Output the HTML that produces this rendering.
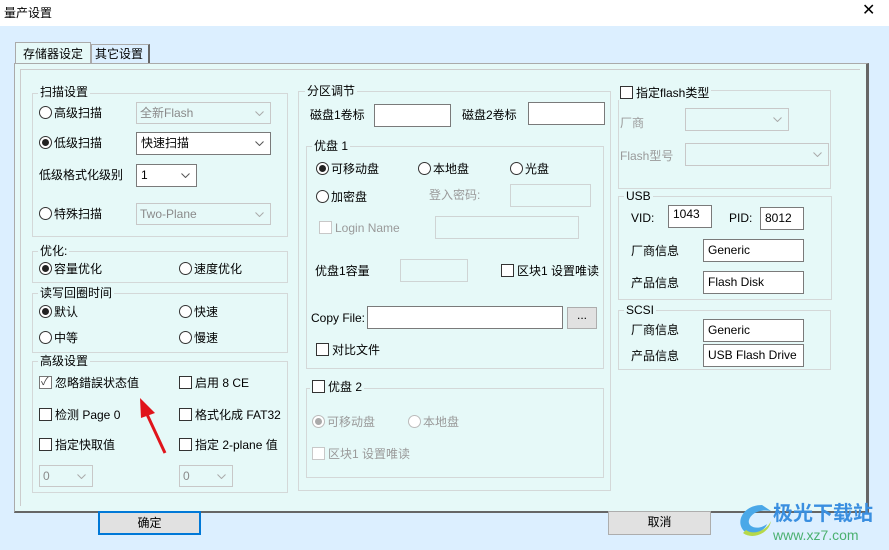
<!DOCTYPE html><html><head><meta charset="utf-8"><style>
*{box-sizing:border-box;margin:0;padding:0}
body{width:889px;height:550px;overflow:hidden;background:#dcefff;font:12px "Liberation Sans","Noto Sans CJK SC",sans-serif;color:#000;position:relative}
.a{position:absolute;white-space:nowrap;line-height:16px}
.g{position:absolute;border:1px solid #d4d8d8}
.gl{position:absolute;background:#e6f9f8;padding:0 2px;line-height:14px}
.in{position:absolute;background:#fff;border:1px solid #7a7a7a}
.dis{position:absolute;border:1px solid #cfd4d4;background:#e6f9f8}
.cb{position:absolute;background:#fff;border:1px solid #7a7a7a;font-size:12px;padding:2px 4px;line-height:16px}
.cbd{position:absolute;border:1px solid #c8c8c8;background:#e6f9f8;color:#8a8a8a;padding:2px 3px;line-height:16px}
.arr{position:absolute;right:6px;top:8px;width:9px;height:5px}
.r{display:inline-block;width:13px;height:13px;border:1px solid #333;border-radius:50%;background:#fff;vertical-align:-2px;margin-right:2px;position:relative}
.r.on::after{content:"";position:absolute;left:2px;top:2px;width:7px;height:7px;border-radius:50%;background:#222}
.c{display:inline-block;width:13px;height:13px;border:1px solid #333;background:#fff;vertical-align:-2px;margin-right:3px;position:relative}
.c.d{border-color:#c8c8c8}
.gray{color:#9a9a9a}
.btn{position:absolute;background:#e1e1e1;border:1px solid #adadad;text-align:center;line-height:20px}
</style></head><body>
<svg width="0" height="0" style="position:absolute"><defs><symbol id="ch" viewBox="0 0 9 5"><path d="M0.5 0.5 L4.5 4.5 L8.5 0.5" fill="none" stroke="#555" stroke-width="1"/></symbol><symbol id="chg" viewBox="0 0 9 5"><path d="M0.5 0.5 L4.5 4.5 L8.5 0.5" fill="none" stroke="#aaa" stroke-width="1"/></symbol></defs></svg>
<div style="position:absolute;left:0;top:0;width:889px;height:26px;background:#fff"></div>
<div class="a" style="left:4px;top:5px">量产设置</div>
<div class="a" style="left:862px;top:3px;font-size:16px">✕</div>
<div style="position:absolute;left:15px;top:42px;width:76px;height:22px;background:#e6f9f8;border:1px solid #aaa;border-bottom:none"></div>
<div class="a" style="left:23px;top:46px">存储器设定</div>
<div style="position:absolute;left:91px;top:44px;width:59px;height:19px;border:1px solid #aaa;border-right:2px solid #666;border-bottom:none"></div>
<div class="a" style="left:95px;top:46px">其它设置</div>
<div style="position:absolute;left:14px;top:63px;width:855px;height:450px;background:#e6f9f8;border:1px solid #aaa;border-right:3px solid #666;border-bottom:2px solid #666"></div>
<div style="position:absolute;left:20px;top:69px;width:840px;height:437px;border-left:1px solid #ccc;border-top:1px solid #ccc"></div>

<div class="g" style="left:32px;top:93px;width:256px;height:144px"></div>
<div class="gl" style="left:38px;top:85px">扫描设置</div>
<div class="a" style="left:39px;top:105px"><span class="r"></span>高级扫描</div>
<div class="cbd" style="left:136px;top:102px;width:135px;height:22px">全新Flash<svg class="arr"><use href="#chg"/></svg></div>
<div class="a" style="left:39px;top:135px"><span class="r on"></span>低级扫描</div>
<div class="cb" style="left:136px;top:132px;width:135px;height:23px">快速扫描<svg class="arr"><use href="#ch"/></svg></div>
<div class="a" style="left:39px;top:167px">低级格式化级别</div>
<div class="cb" style="left:136px;top:164px;width:61px;height:23px">1<svg class="arr"><use href="#ch"/></svg></div>
<div class="a" style="left:39px;top:206px"><span class="r"></span>特殊扫描</div>
<div class="cbd" style="left:136px;top:203px;width:135px;height:22px">Two-Plane<svg class="arr"><use href="#chg"/></svg></div>

<div class="g" style="left:32px;top:251px;width:256px;height:32px"></div>
<div class="gl" style="left:38px;top:244px">优化:</div>
<div class="a" style="left:39px;top:261px"><span class="r on"></span>容量优化</div>
<div class="a" style="left:179px;top:261px"><span class="r"></span>速度优化</div>

<div class="g" style="left:32px;top:293px;width:256px;height:60px"></div>
<div class="gl" style="left:38px;top:286px">读写回圈时间</div>
<div class="a" style="left:39px;top:304px"><span class="r on"></span>默认</div>
<div class="a" style="left:179px;top:304px"><span class="r"></span>快速</div>
<div class="a" style="left:39px;top:330px"><span class="r"></span>中等</div>
<div class="a" style="left:179px;top:330px"><span class="r"></span>慢速</div>

<div class="g" style="left:32px;top:361px;width:256px;height:132px"></div>
<div class="gl" style="left:38px;top:354px">高级设置</div>
<div class="a" style="left:39px;top:375px"><span class="c" style="border-color:#777"><span style="position:absolute;left:1px;top:-3px;font-size:11px;color:#444">✓</span></span>忽略錯誤状态值</div>
<div class="a" style="left:179px;top:375px"><span class="c"></span>启用 8 CE</div>
<div class="a" style="left:39px;top:407px"><span class="c"></span>检测 Page 0</div>
<div class="a" style="left:179px;top:407px"><span class="c"></span>格式化成 FAT32</div>
<div class="a" style="left:39px;top:437px"><span class="c"></span>指定快取值</div>
<div class="a" style="left:179px;top:437px"><span class="c"></span>指定 2-plane 值</div>
<div class="cbd" style="left:39px;top:465px;width:54px;height:22px">0<svg class="arr"><use href="#chg"/></svg></div>
<div class="cbd" style="left:179px;top:465px;width:54px;height:22px">0<svg class="arr"><use href="#chg"/></svg></div>
<svg style="position:absolute;left:135px;top:398px" width="35" height="60"><line x1="30" y1="55" x2="10" y2="12" stroke="#e0141b" stroke-width="3"/><polygon points="5,0 20,15 6,20" fill="#e0141b"/></svg>

<div class="g" style="left:298px;top:91px;width:313px;height:400px"></div>
<div class="gl" style="left:305px;top:84px">分区调节</div>
<div class="a" style="left:310px;top:107px">磁盘1卷标</div>
<div class="in" style="left:374px;top:104px;width:77px;height:23px"></div>
<div class="a" style="left:462px;top:107px">磁盘2卷标</div>
<div class="in" style="left:528px;top:102px;width:77px;height:23px"></div>
<div class="g" style="left:306px;top:146px;width:298px;height:223px"></div>
<div class="gl" style="left:312px;top:139px">优盘 1</div>
<div class="a" style="left:316px;top:161px"><span class="r on"></span>可移动盘</div>
<div class="a" style="left:418px;top:161px"><span class="r"></span>本地盘</div>
<div class="a" style="left:510px;top:161px"><span class="r"></span>光盘</div>
<div class="a" style="left:316px;top:189px"><span class="r"></span>加密盘</div>
<div class="a gray" style="left:429px;top:187px">登入密码:</div>
<div class="dis" style="left:510px;top:184px;width:81px;height:23px"></div>
<div class="a gray" style="left:319px;top:220px"><span class="c d"></span>Login Name</div>
<div class="dis" style="left:435px;top:216px;width:144px;height:23px"></div>
<div class="a" style="left:315px;top:263px">优盘1容量</div>
<div class="dis" style="left:400px;top:259px;width:68px;height:23px"></div>
<div class="a" style="left:501px;top:263px"><span class="c"></span>区块1 设置唯读</div>
<div class="a" style="left:311px;top:310px">Copy File:</div>
<div class="in" style="left:367px;top:306px;width:196px;height:23px"></div>
<div class="btn" style="left:567px;top:307px;width:30px;height:22px;line-height:14px">...</div>
<div class="a" style="left:316px;top:342px"><span class="c"></span>对比文件</div>
<div class="g" style="left:306px;top:388px;width:298px;height:90px"></div>
<div class="gl" style="left:310px;top:380px;background:#e6f9f8"><span class="c"></span>优盘 2</div>
<div class="a gray" style="left:312px;top:414px"><span class="r" style="border-color:#bbb"><span style="position:absolute;left:2px;top:2px;width:7px;height:7px;border-radius:50%;background:#aaa"></span></span>可移动盘</div>
<div class="a gray" style="left:408px;top:414px"><span class="r" style="border-color:#bbb"></span>本地盘</div>
<div class="a gray" style="left:312px;top:446px"><span class="c d"></span>区块1 设置唯读</div>

<div class="g" style="left:618px;top:90px;width:213px;height:99px"></div>
<div class="gl" style="left:618px;top:86px"><span class="c"></span>指定flash类型</div>
<div class="a gray" style="left:620px;top:115px">厂商</div>
<div class="cbd" style="left:685px;top:108px;width:104px;height:23px"><svg class="arr"><use href="#chg"/></svg></div>
<div class="a gray" style="left:620px;top:148px">Flash型号</div>
<div class="cbd" style="left:685px;top:143px;width:144px;height:23px"><svg class="arr"><use href="#chg"/></svg></div>
<div class="g" style="left:618px;top:196px;width:214px;height:104px"></div>
<div class="gl" style="left:624px;top:189px">USB</div>
<div class="a" style="left:631px;top:210px">VID:</div>
<div class="in" style="left:668px;top:205px;width:44px;height:23px;padding:1px 4px">1043</div>
<div class="a" style="left:729px;top:210px">PID:</div>
<div class="in" style="left:760px;top:207px;width:44px;height:23px;padding:3px 4px">8012</div>
<div class="a" style="left:631px;top:243px">厂商信息</div>
<div class="in" style="left:703px;top:239px;width:101px;height:23px;padding:3px 4px">Generic</div>
<div class="a" style="left:631px;top:275px">产品信息</div>
<div class="in" style="left:703px;top:271px;width:101px;height:23px;padding:3px 4px">Flash Disk</div>
<div class="g" style="left:618px;top:310px;width:213px;height:60px"></div>
<div class="gl" style="left:624px;top:303px">SCSI</div>
<div class="a" style="left:631px;top:322px">厂商信息</div>
<div class="in" style="left:703px;top:319px;width:101px;height:23px;padding:3px 4px">Generic</div>
<div class="a" style="left:631px;top:348px">产品信息</div>
<div class="in" style="left:703px;top:344px;width:101px;height:23px;padding:3px 4px">USB Flash Drive</div>

<div class="btn" style="left:98px;top:511px;width:103px;height:24px;border:2px solid #0078d7">确定</div>
<div class="btn" style="left:608px;top:511px;width:103px;height:24px">取消</div>
<svg style="position:absolute;left:734px;top:502px" width="40" height="36"><path d="M28 3 C9 3 1 20 10 29 C18 35 31 29 33 22 C24 29 13 25 15 18 C17 11 26 7 37 9 Z" fill="#4aa8e8"/><path d="M12 28 C20 34 33 28 37 19 C35 32 18 38 9 31 Z" fill="#b6d84a"/></svg>
<div class="a" style="left:773px;top:502px;font-size:20px;line-height:24px;color:#3a8fe0;font-weight:bold">极光下载站</div>
<div class="a" style="left:773px;top:527px;font-size:14px;line-height:16px;color:#4bb070">www.xz7.com</div>
</body></html>
